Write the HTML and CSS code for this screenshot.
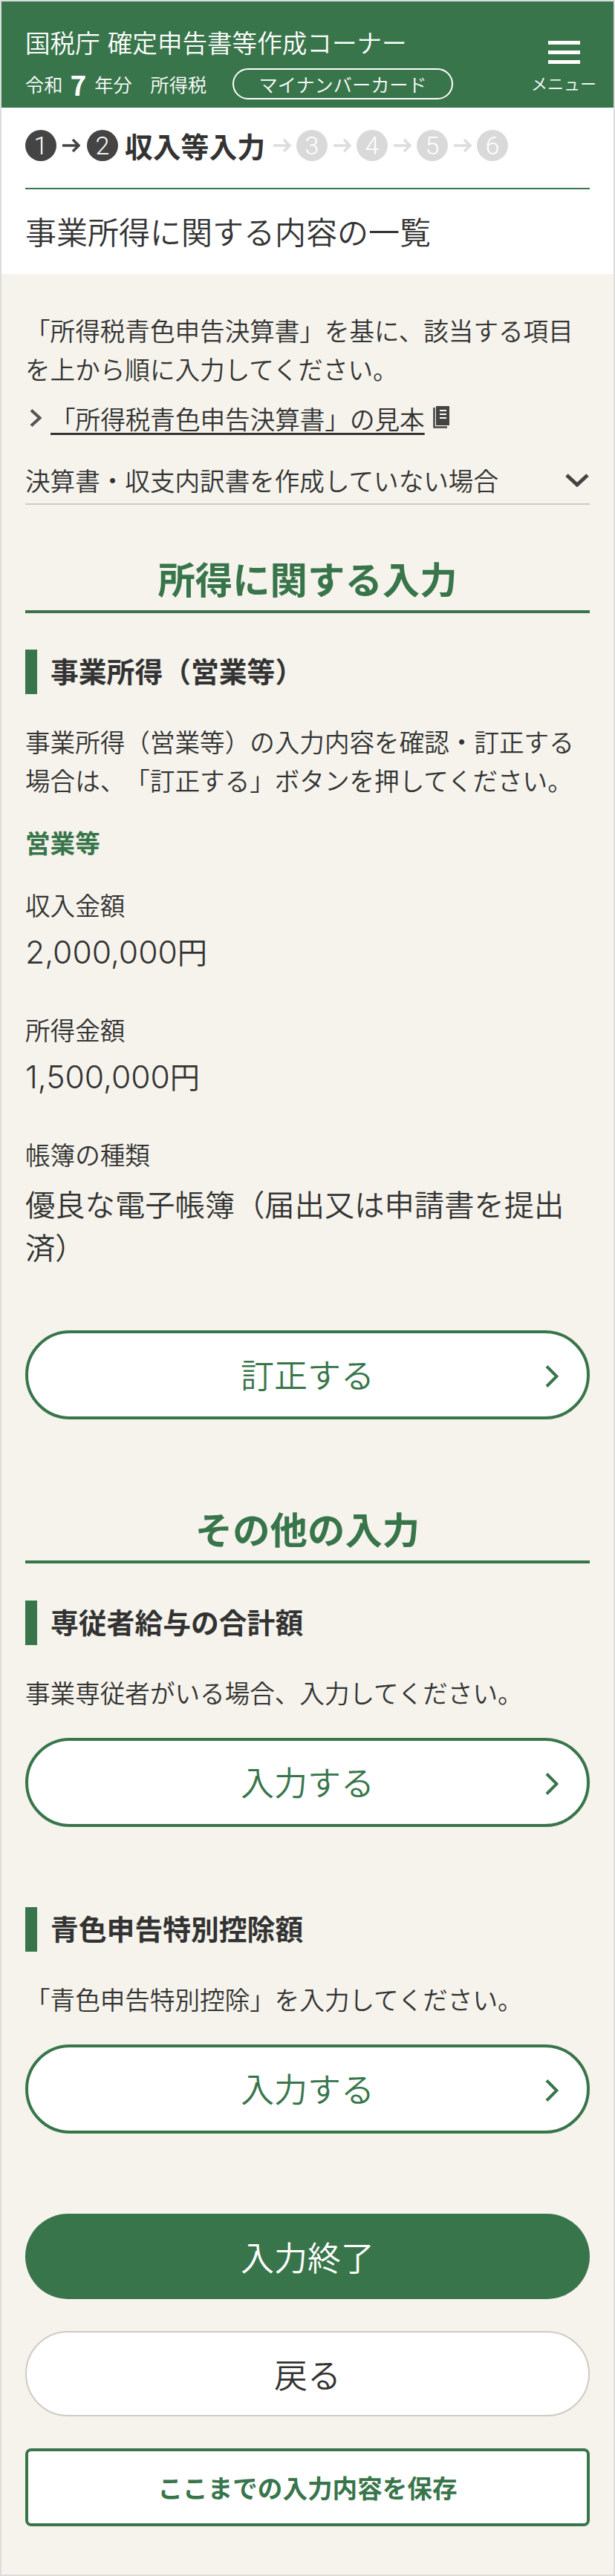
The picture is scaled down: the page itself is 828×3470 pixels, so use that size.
FILE: index.html
```html
<!DOCTYPE html>
<html lang="ja">
<head>
<meta charset="utf-8">
<title>事業所得に関する内容の一覧</title>
<link rel="stylesheet" href="styles.css">
</head>
<body>
<div class="page">
  <header class="site-header">
    <div class="brand">
      <div class="brand-title">国税庁 確定申告書等作成コーナー</div>
      <div class="brand-meta">
        <span>令和</span><b class="year">7</b><span>年分</span><span class="tax">所得税</span>
        <span class="pill">マイナンバーカード</span>
      </div>
    </div>
    <div class="menu">
      <span class="menu-bars"><i></i><i></i><i></i></span>
      <span class="menu-label">メニュー</span>
    </div>
  </header>

  <section class="top">
    <div class="steps">
      <span class="num on">1</span>
      <svg class="arrow on-arrow" viewBox="0 0 25 20"><path d="M1 10H23M15 2l8 8-8 8"/></svg>
      <span class="num on">2</span>
      <span class="step-name">収入等入力</span>
      <svg class="arrow off-arrow" viewBox="0 0 25 20"><path d="M1 10H23M15 2l8 8-8 8"/></svg>
      <span class="num off">3</span>
      <svg class="arrow off-arrow" viewBox="0 0 25 20"><path d="M1 10H23M15 2l8 8-8 8"/></svg>
      <span class="num off">4</span>
      <svg class="arrow off-arrow" viewBox="0 0 25 20"><path d="M1 10H23M15 2l8 8-8 8"/></svg>
      <span class="num off">5</span>
      <svg class="arrow off-arrow" viewBox="0 0 25 20"><path d="M1 10H23M15 2l8 8-8 8"/></svg>
      <span class="num off">6</span>
    </div>
    <h1 class="page-title">事業所得に関する内容の一覧</h1>
  </section>

  <main class="content">
    <p class="text intro">「所得税青色申告決算書」を基に、該当する項目を上から順に入力してください。</p>
    <div class="sample">
      <svg class="sample-chev" viewBox="0 0 16 24"><path d="M2 1.5 13.5 12 2 22.5"/></svg>
      <a class="sample-link">「所得税青色申告決算書」の見本</a>
      <svg class="book" viewBox="0 0 22 30"><path class="book-edge" d="M1.5 2V28.5H19"/><rect class="book-body" x="4" y="0" width="18" height="26"/><path class="book-lines" d="M9 6h9M9 11h9M9 16h9"/></svg>
    </div>
    <div class="collapse">
      <span>決算書・収支内訳書を作成していない場合</span>
      <svg class="collapse-chev" viewBox="0 0 32 18"><path d="M2 2 16 15 30 2"/></svg>
    </div>

    <h2 class="section-title first">所得に関する入力</h2>
    <h3 class="sub first-sub">事業所得（営業等）</h3>
    <p class="text sub-text">事業所得（営業等）の入力内容を確認・訂正する場合は、「訂正する」ボタンを押してください。</p>
    <h4 class="group">営業等</h4>
    <dl class="data">
      <dt class="label first-label">収入金額</dt>
      <dd class="value amount-row"><span class="amount">2,000,000</span>円</dd>
      <dt class="label">所得金額</dt>
      <dd class="value amount-row"><span class="amount">1,500,000</span>円</dd>
      <dt class="label">帳簿の種類</dt>
      <dd class="value">優良な電子帳簿（届出又は申請書を提出済）</dd>
    </dl>
    <a class="btn outline fix">訂正する<svg class="btn-chev" viewBox="0 0 18 30"><path d="M2 1.5 15.5 15 2 28.5"/></svg></a>

    <h2 class="section-title second">その他の入力</h2>
    <h3 class="sub second-sub">専従者給与の合計額</h3>
    <p class="text sub-text">事業専従者がいる場合、入力してください。</p>
    <a class="btn outline input">入力する<svg class="btn-chev" viewBox="0 0 18 30"><path d="M2 1.5 15.5 15 2 28.5"/></svg></a>
    <h3 class="sub later">青色申告特別控除額</h3>
    <p class="text sub-text">「青色申告特別控除」を入力してください。</p>
    <a class="btn outline input">入力する<svg class="btn-chev" viewBox="0 0 18 30"><path d="M2 1.5 15.5 15 2 28.5"/></svg></a>

    <a class="btn solid">入力終了</a>
    <a class="btn plain">戻る</a>
    <a class="save">ここまでの入力内容を保存</a>
  </main>
</div>
</body>
</html>
```
FILE: styles.css
```css
* { box-sizing: border-box; }
html, body { margin: 0; padding: 0; }
body {
  width: 828px;
  height: 3470px;
  border: 2px solid #dcdcdc;
  background: #f5f3ec;
  color: #333;
  font-family: "Noto Sans CJK JP", "Noto Sans", sans-serif;
  font-weight: 350;
  text-spacing-trim: space-all;
  overflow: hidden;
}
h1, h2, h3, h4, p, dl, dd, dt { margin: 0; padding: 0; font-size: inherit; font-weight: inherit; }

.site-header {
  height: 143px;
  background: #39754b;
  color: #fff;
  display: flex;
  justify-content: space-between;
  padding: 0 22px 0 32px;
}
.brand-title {
  margin-top: 34px;
  height: 42px;
  line-height: 42px;
  font-size: 33.6px;
  word-spacing: 2.5px;
  white-space: nowrap;
}
.brand-meta {
  margin-top: 13px;
  height: 44px;
  display: flex;
  align-items: center;
  font-size: 25.2px;
  white-space: nowrap;
}
.year { font-size: 37px; font-weight: 700; margin: 0 11px 0 10px; line-height: 44px; }
.tax { margin-left: 25px; }
.pill {
  margin-left: 35px;
  width: 297px;
  height: 42px;
  border: 2px solid #fff;
  border-radius: 21px;
  display: flex;
  align-items: center;
  justify-content: center;
  font-size: 25.2px;
}
.menu {
  width: 90px;
  padding-top: 53px;
  display: flex;
  flex-direction: column;
  align-items: center;
}
.menu-bars { display: flex; flex-direction: column; gap: 8.5px; width: 43px; }
.menu-bars i { display: block; height: 4.5px; background: #fff; }
.menu-label { font-size: 22px; line-height: 30px; margin-top: 10px; white-space: nowrap; }

.top { background: #fff; height: 224px; padding: 0 32px; }
.steps {
  height: 110px;
  padding-top: 30px;
  border-bottom: 2px solid #39754b;
  display: flex;
  align-items: flex-start;
}
.num {
  width: 42px;
  height: 42px;
  flex: none;
  border-radius: 50%;
  color: #fff;
  font-family: Roboto, sans-serif;
  font-weight: 300;
  font-size: 34px;
  line-height: 42px;
  text-align: center;
}
.num.on { background: #444; }
.num.off { background: #d9d9d9; }
.arrow { width: 25px; height: 20px; margin: 11px 7px 0; flex: none; fill: none; stroke-width: 3.5; }
.on-arrow { stroke: #444; margin-left: 7px; margin-right: 9px; }
.off-arrow { stroke: #ddd; }
.step-name { font-size: 37.8px; line-height: 42px; font-weight: 700; margin-left: 9px; margin-right: 3px; white-space: nowrap; }
.page-title { font-size: 42px; line-height: 60px; margin-top: 26px; }

.content { padding: 50px 32px 0; }
.text { font-size: 33.6px; line-height: 52px; }
.sample { display: flex; align-items: center; height: 52px; margin-top: 14px; font-size: 33.6px; }
.sample-chev { width: 16px; height: 24px; margin-left: 6px; fill: none; stroke: #555; stroke-width: 4; flex: none; }
.sample-link { margin-left: 12px; text-decoration: underline; text-underline-offset: 5px; white-space: nowrap; }
.book { width: 22px; height: 30px; margin-left: 11px; flex: none; margin-top: -3px; }
.book-edge { fill: none; stroke: #444; stroke-width: 2.5; }
.book-body { fill: #444; }
.book-lines { stroke: #fff; stroke-width: 2; fill: none; }
.collapse {
  margin-top: 33px;
  height: 58px;
  padding-bottom: 6px;
  border-bottom: 2px solid #cfcbc4;
  display: flex;
  align-items: center;
  justify-content: space-between;
  font-size: 33.6px;
  line-height: 52px;
}
.collapse-chev { width: 32px; height: 18px; margin-right: 1px; fill: none; stroke: #444; stroke-width: 5; flex: none; }

.section-title {
  font-size: 50.4px;
  line-height: 58px;
  font-weight: 700;
  color: #39754b;
  text-align: center;
  padding-bottom: 14px;
  border-bottom: 4px solid #39754b;
}
.section-title.first { margin-top: 70px; }
.section-title.second { margin-top: 118px; }
.sub {
  height: 60px;
  border-left: 16px solid #39754b;
  padding-left: 18px;
  font-size: 37.8px;
  line-height: 56px;
  font-weight: 700;
  white-space: nowrap;
}
.sub.first-sub { margin-top: 49px; }
.sub.second-sub { margin-top: 50px; }
.sub.later { margin-top: 108px; }
.sub-text { margin-top: 38px; }
.group { margin-top: 32px; font-size: 33.6px; line-height: 52px; font-weight: 700; color: #39754b; }
.label { font-size: 33.6px; line-height: 52px; margin-top: 51px; }
.label.first-label { margin-top: 32px; }
.value { font-size: 40.3px; line-height: 58px; margin-top: 11px; }
.value.amount-row { margin-top: 7px; }
.amount { font-family: Inter, sans-serif; font-weight: 300; font-size: 42.6px; line-height: 1; }

.btn {
  display: flex;
  align-items: center;
  justify-content: center;
  position: relative;
  border-radius: 60px;
  font-size: 45px;
  background: #fff;
}
.outline { height: 120px; border: 4px solid #39754b; color: #39754b; margin-top: 35px; padding-bottom: 3px; }
.fix { margin-top: 84px; }
.btn-chev { position: absolute; right: 38px; top: 50%; margin-top: -13px; width: 18px; height: 30px; fill: none; stroke: #39754b; stroke-width: 4; }
.solid { height: 115px; margin-top: 108px; background: #39754b; color: #fff; }
.plain { height: 115px; margin-top: 43px; border: 2px solid #cfcbc4; color: #333; }
.save {
  margin-top: 43px;
  height: 105px;
  display: flex;
  align-items: center;
  justify-content: center;
  background: #fff;
  border: 4px solid #39754b;
  border-radius: 8px;
  color: #39754b;
  font-size: 33.6px;
  font-weight: 700;
}
```
